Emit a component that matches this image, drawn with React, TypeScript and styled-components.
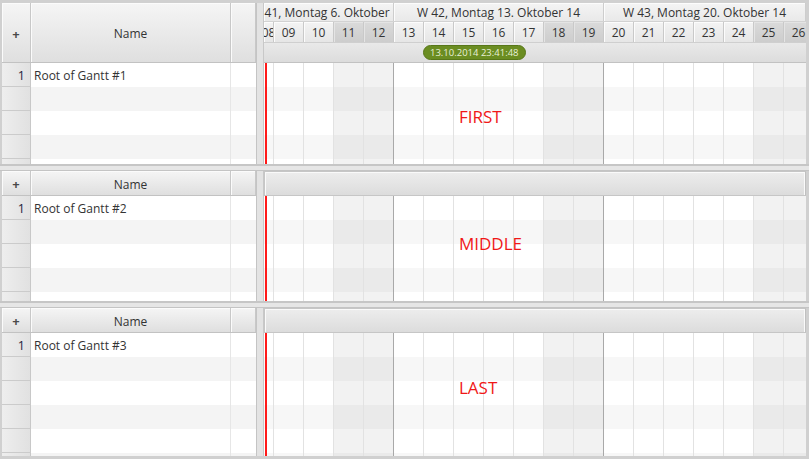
import React from 'react';
import styled, { createGlobalStyle } from 'styled-components';

const GlobalStyle = createGlobalStyle`
  html, body { margin: 0; padding: 0; background: #d2d2d2; }
  body { font-family: "Open Sans", "Noto Sans", sans-serif; font-size: 12px; color: #333; }
  * { box-sizing: border-box; }
`;

const Frame = styled.div`
  width: 809px;
  height: 459px;
  background: #d0d0d0;
  padding: 3px 3px 3px 2px;
  display: flex;
  flex-direction: column;
  overflow: hidden;
`;

const Section = styled.div<{ $h?: number }>`
  display: flex;
  flex: ${(p) => (p.$h ? `0 0 ${p.$h}px` : '1 1 auto')};
  min-height: 0;
  overflow: hidden;
`;

const SectionDivider = styled.div`
  flex: 0 0 7px;
  background: #e6e6e6;
  border-top: 2px solid #c6c6c6;
  border-bottom: 1px solid #c4c4c4;
  margin: 0 -3px 0 -2px;
`;

const Table = styled.div`
  width: 255px;
  flex: none;
  display: flex;
  flex-direction: column;
  background: #fff;
  border-right: 1px solid #c4c4c4;
`;

const Splitter = styled.div`
  width: 7px;
  flex: none;
  background: #e3e3e3;
  border-right: 1px solid #c8c8c8;
`;

const TableHeader = styled.div<{ $h: number }>`
  flex: 0 0 ${(p) => p.$h}px;
  display: grid;
  grid-template-columns: 29px 200px 1fr;
  border-bottom: 1px solid #c2c2c2;
`;

const HeaderCell = styled.div<{ $bold?: boolean }>`
  display: flex;
  align-items: center;
  justify-content: center;
  padding-top: 2px;
  background: linear-gradient(#f5f5f5, #dfdfdf);
  border-right: 1px solid #c8c8c8;
  box-shadow: inset 1px 1px 0 #fbfbfb;
  color: ${(p) => (p.$bold ? '#4a4a4a' : '#333')};
  font-weight: ${(p) => (p.$bold ? 700 : 400)};
  font-size: ${(p) => (p.$bold ? '13px' : '12px')};
`;

const TableBody = styled.div`
  flex: 1 1 auto;
  overflow: hidden;
  min-height: 0;
`;

const TableRow = styled.div`
  height: 24px;
  display: grid;
  grid-template-columns: 29px 200px 1fr;
`;

const RowNum = styled.div`
  background: linear-gradient(to right, #eeeeee, #e1e1e1);
  border-right: 1px solid #c8c8c8;
  border-bottom: 1px solid #cbcbcb;
  text-align: right;
  padding-right: 5px;
  padding-top: 1px;
  line-height: 23px;
  font-size: 12.5px;
  color: #1d1d3a;
  overflow: hidden;
`;

const DataCell = styled.div<{ $odd: boolean; $last?: boolean }>`
  background: ${(p) => (p.$odd ? '#f4f4f4' : '#ffffff')};
  border-right: ${(p) => (p.$last ? 'none' : '1px solid #e6e6e6')};
  padding-left: 3px;
  padding-top: 1px;
  line-height: 24px;
  white-space: nowrap;
  overflow: hidden;
`;

const Timeline = styled.div`
  flex: 1 1 auto;
  display: flex;
  flex-direction: column;
  overflow: hidden;
  min-width: 0;
  background: #fff;
`;

const WeekRow = styled.div`
  flex: 0 0 19px;
  display: flex;
  border-bottom: 1px solid #d2d2d2;
`;

const WeekCell = styled.div<{ $w?: number }>`
  flex: ${(p) => (p.$w ? `0 0 ${p.$w}px` : '1 1 auto')};
  display: flex;
  justify-content: center;
  align-items: center;
  overflow: hidden;
  white-space: nowrap;
  background: linear-gradient(#f4f4f4, #e9e9e9);
  border-right: 1px solid #cdcdcd;
  box-shadow: inset 1px 1px 0 #fcfcfc;
  color: #333;
`;

const CellText = styled.span`
  flex: none;
`;

const DayRow = styled.div`
  flex: 0 0 21px;
  display: flex;
  overflow: hidden;
  border-bottom: 1px solid #cfcfcf;
`;

const DayCell = styled.div<{ $weekend: boolean; $w: number }>`
  flex: 0 0 ${(p) => p.$w}px;
  display: flex;
  align-items: center;
  justify-content: center;
  padding-top: 1px;
  overflow: hidden;
  background: ${(p) =>
    p.$weekend ? 'linear-gradient(#dadada, #cdcdcd)' : 'linear-gradient(#f3f3f3, #e6e6e6)'};
  border-right: 1px solid #c9c9c9;
  box-shadow: inset 1px 1px 0 ${(p) => (p.$weekend ? '#e4e4e4' : '#fcfcfc')};
  color: #333;
`;

const BadgeRow = styled.div`
  flex: 0 0 20px;
  display: flex;
  align-items: center;
  padding-left: 159px;
  background: linear-gradient(#e9e9e9, #dcdcdc);
  border-bottom: 1px solid #c2c2c2;
`;

const Badge = styled.div`
  height: 15px;
  padding: 0 6px;
  border-radius: 8px;
  background: #6b8d22;
  border: 1px solid #587719;
  color: #e8f0d6;
  font-size: 9.5px;
  line-height: 13px;
  white-space: nowrap;
`;

const EmptyHeader = styled.div`
  flex: 0 0 25px;
  background: linear-gradient(#ededed, #dcdcdc);
  border: 1px solid #c6c6c6;
  border-right-color: #c0c0c0;
  box-shadow: inset 1px 1px 0 #fafafa, inset -1px 0 0 #fafafa;
`;

const ChartBody = styled.div`
  flex: 1 1 auto;
  position: relative;
  overflow: hidden;
  min-height: 0;
  background: repeating-linear-gradient(
    to bottom,
    #ffffff 0px,
    #ffffff 24px,
    #f7f7f7 24px,
    #f7f7f7 48px
  );
`;

const GridStrip = styled.div`
  display: flex;
  margin-left: -20px;
  height: 100%;
`;

const GridCol = styled.div<{ $weekend: boolean; $weekEnd: boolean }>`
  flex: 0 0 30px;
  height: 100%;
  background: ${(p) => (p.$weekend ? 'rgba(0,0,0,0.05)' : 'transparent')};
  border-right: 1px solid ${(p) => (p.$weekEnd ? '#a9a9a9' : '#e2e2e2')};
`;

const NowLine = styled.div`
  position: absolute;
  left: 1px;
  top: 0;
  bottom: 0;
  width: 2px;
  background: #ff1a1a;
`;

const Label = styled.div<{ $top: number }>`
  position: absolute;
  left: 195px;
  top: ${(p) => p.$top}px;
  font-size: 17px;
  line-height: 20px;
  color: #f01818;
`;

const days = Array.from({ length: 19 }, (_, i) => 8 + i);
const weekendDays = new Set([11, 12, 18, 19, 25, 26]);
const weekEnds = new Set([12, 19, 26]);
const pad = (n: number) => (n < 10 ? `0${n}` : `${n}`);

function LeftTable({ title, tall, rows }: { title: string; tall: boolean; rows: number }) {
  return (
    <Table>
      <TableHeader $h={tall ? 60 : 25}>
        <HeaderCell $bold>+</HeaderCell>
        <HeaderCell>Name</HeaderCell>
        <HeaderCell />
      </TableHeader>
      <TableBody>
        {Array.from({ length: rows }, (_, i) => (
          <TableRow key={i}>
            <RowNum>{i === 0 ? '1' : ''}</RowNum>
            <DataCell $odd={i % 2 === 1}>{i === 0 ? title : ''}</DataCell>
            <DataCell $odd={i % 2 === 1} $last />
          </TableRow>
        ))}
      </TableBody>
    </Table>
  );
}

function Chart({ label, labelTop }: { label: string; labelTop: number }) {
  return (
    <ChartBody>
      <GridStrip>
        {days.map((d) => (
          <GridCol key={d} $weekend={weekendDays.has(d)} $weekEnd={weekEnds.has(d)} />
        ))}
      </GridStrip>
      <NowLine />
      <Label $top={labelTop}>{label}</Label>
    </ChartBody>
  );
}

export default function App() {
  return (
    <>
      <GlobalStyle />
      <Frame>
        <Section $h={161}>
          <LeftTable title="Root of Gantt #1" tall rows={5} />
          <Splitter />
          <Timeline>
            <WeekRow>
              <WeekCell $w={130}>
                <CellText>W 41, Montag 6. Oktober 14</CellText>
              </WeekCell>
              <WeekCell $w={210}>
                <CellText>W 42, Montag 13. Oktober 14</CellText>
              </WeekCell>
              <WeekCell>
                <CellText>W 43, Montag 20. Oktober 14</CellText>
              </WeekCell>
            </WeekRow>
            <DayRow>
              {days.map((d, i) => (
                <DayCell key={d} $w={i === 0 ? 10 : 30} $weekend={weekendDays.has(d)}>
                  <CellText>{pad(d)}</CellText>
                </DayCell>
              ))}
            </DayRow>
            <BadgeRow>
              <Badge>13.10.2014 23:41:48</Badge>
            </BadgeRow>
            <Chart label="FIRST" labelTop={44} />
          </Timeline>
        </Section>
        <SectionDivider />
        <Section $h={130}>
          <LeftTable title="Root of Gantt #2" tall={false} rows={5} />
          <Splitter />
          <Timeline>
            <EmptyHeader />
            <Chart label="MIDDLE" labelTop={38} />
          </Timeline>
        </Section>
        <SectionDivider />
        <Section>
          <LeftTable title="Root of Gantt #3" tall={false} rows={6} />
          <Splitter />
          <Timeline>
            <EmptyHeader />
            <Chart label="LAST" labelTop={45} />
          </Timeline>
        </Section>
      </Frame>
    </>
  );
}
